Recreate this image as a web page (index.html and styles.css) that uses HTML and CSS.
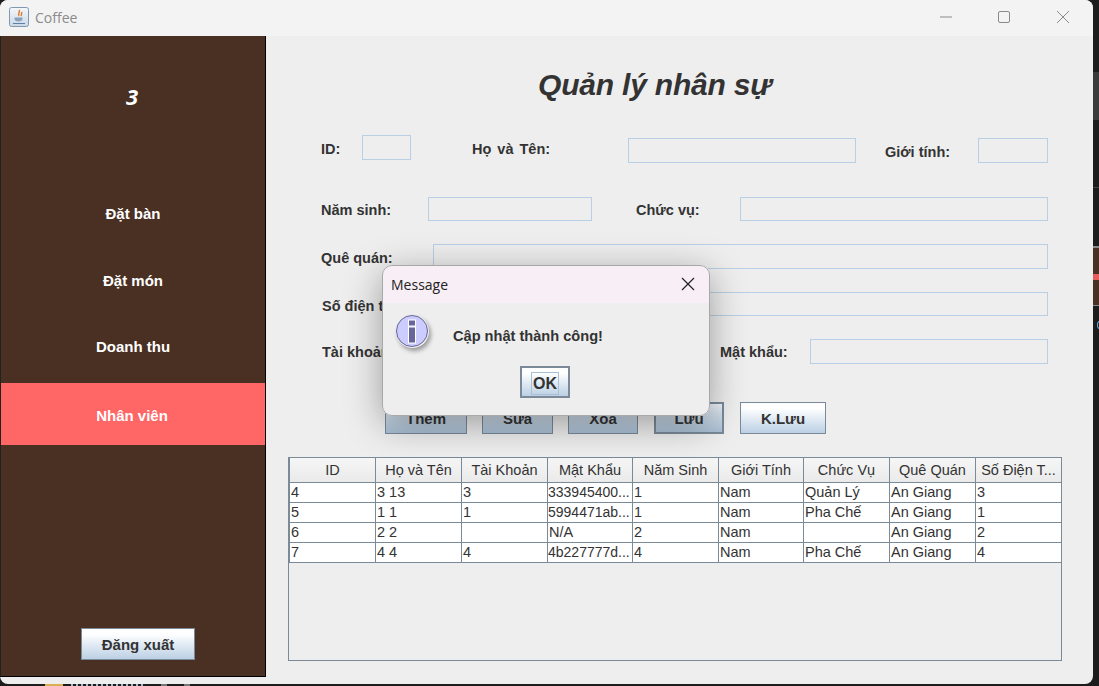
FILE: index.html
```html
<!DOCTYPE html>
<html lang="en">
<head>
  <meta charset="UTF-8">
  <title>Coffee</title>
  <link rel="stylesheet" href="styles.css">
</head>
<body>
<div class="desktop-right">
  <div class="desktop-panel"></div>
  <div class="desktop-line"></div>
  <div class="desktop-brown"><div class="desktop-red"></div></div>
  <div class="desktop-dot"></div>
</div>
<div class="desktop-bottom">
  <div class="taskbar-yellow"></div>
  <div class="taskbar-text"></div>
  <div class="taskbar-grey"></div>
  <div class="taskbar-grey"></div>
</div>

<div class="window">
  <div class="title-bar">
    <svg class="java-icon" width="20" height="20" viewBox="0 0 20 20">
      <defs>
        <linearGradient id="java-bg" x1="0" y1="0" x2="0" y2="1">
          <stop offset="0" stop-color="#f4f7fa"/>
          <stop offset="1" stop-color="#c9d8e6"/>
        </linearGradient>
      </defs>
      <rect x="0.5" y="0.5" width="19" height="19" rx="2" fill="url(#java-bg)" stroke="#8098b0"/>
      <path d="M10 3c2 2-2 3 0 6M12.500 5c1 1.500-1 2.500 0 4" stroke="#de7d32" stroke-width="1.500" fill="none"/>
      <path d="M5.500 10.500h8v1.500c0 1.500-1.800 2.500-4 2.500s-4-1-4-2.500z" fill="#8aa2ba"/>
      <path d="M4 16.500h12" stroke="#5b7fa6"/>
    </svg>
    <span class="title-text">Coffee</span>
    <div class="title-controls">
      <svg width="12" height="12" viewBox="0 0 12 12"><path d="M0 6h12" stroke="#8a8a8a"/></svg>
      <svg width="12" height="12" viewBox="0 0 12 12"><rect x="0.500" y="0.500" width="11" height="11" rx="1.500" fill="none" stroke="#8a8a8a"/></svg>
      <svg class="title-close" width="12" height="12" viewBox="0 0 12 12"><path d="M0 0l12 12M12 0L0 12" stroke="#8a8a8a"/></svg>
    </div>
  </div>

  <div class="main">
    <div class="side-menu">
      <div class="side-user">3</div>
      <div class="side-items">
        <div class="side-item">Đặt bàn</div>
        <div class="side-item">Đặt món</div>
        <div class="side-item side-item-up">Doanh thu</div>
        <div class="side-item side-item-active">Nhân viên</div>
      </div>
      <button class="java-btn logout-btn">Đăng xuất</button>
    </div>

    <div class="content">
      <h1 class="page-title">Quản lý nhân sự</h1>

      <div class="form-row row-1">
        <label class="lbl lbl-id">ID:</label>
        <div class="field field-id"></div>
        <label class="lbl lbl-name">Họ và Tên:</label>
        <div class="field field-name"></div>
        <label class="lbl lbl-gender">Giới tính:</label>
        <div class="field field-gender"></div>
      </div>
      <div class="form-row row-2">
        <label class="lbl lbl-year">Năm sinh:</label>
        <div class="field field-year"></div>
        <label class="lbl lbl-role">Chức vụ:</label>
        <div class="field field-grow"></div>
      </div>
      <div class="form-row row-3">
        <label class="lbl lbl-wide">Quê quán:</label>
        <div class="field field-grow"></div>
      </div>
      <div class="form-row row-4">
        <label class="lbl lbl-wide lbl-shift">Số điện thoại:</label>
        <div class="field field-grow"></div>
      </div>
      <div class="form-row row-5">
        <label class="lbl lbl-wide lbl-shift">Tài khoản:</label>
        <div class="field field-account"></div>
        <label class="lbl lbl-pass">Mật khẩu:</label>
        <div class="field field-grow"></div>
      </div>

      <div class="btn-row">
        <button class="java-btn btn-pressed btn-add">Thêm</button>
        <button class="java-btn btn-pressed btn-edit">Sửa</button>
        <button class="java-btn btn-pressed btn-del">Xóa</button>
        <button class="java-btn btn-pressed btn-focus btn-save">Lưu</button>
        <button class="java-btn btn-cancel">K.Lưu</button>
      </div>

      <div class="table-box">
        <table class="staff-table">
          <colgroup>
            <col class="col-wide"><col class="col-wide"><col class="col-wide"><col class="col-narrow"><col class="col-wide"><col class="col-narrow"><col class="col-wide"><col class="col-wide"><col class="col-wide">
          </colgroup>
          <thead>
            <tr><th>ID</th><th>Họ và Tên</th><th>Tài Khoản</th><th>Mật Khẩu</th><th>Năm Sinh</th><th>Giới Tính</th><th>Chức Vụ</th><th>Quê Quán</th><th>Số Điện T...</th></tr>
          </thead>
          <tbody>
            <tr><td>4</td><td>3 13</td><td>3</td><td class="cell-hash">333945400...</td><td>1</td><td>Nam</td><td>Quản Lý</td><td>An Giang</td><td>3</td></tr>
            <tr><td>5</td><td>1 1</td><td>1</td><td class="cell-hash">5994471ab...</td><td>1</td><td>Nam</td><td>Pha Chế</td><td>An Giang</td><td>1</td></tr>
            <tr><td>6</td><td>2 2</td><td></td><td>N/A</td><td>2</td><td>Nam</td><td></td><td>An Giang</td><td>2</td></tr>
            <tr><td>7</td><td>4 4</td><td>4</td><td class="cell-hash">4b227777d...</td><td>4</td><td>Nam</td><td>Pha Chế</td><td>An Giang</td><td>4</td></tr>
          </tbody>
        </table>
      </div>
    </div>
  </div>
</div>

<div class="dialog">
  <div class="dialog-title">
    <span>Message</span>
    <svg width="14" height="14" viewBox="0 0 14 14"><path d="M1 1l12 12M13 1L1 13" stroke="#222" stroke-width="1.200"/></svg>
  </div>
  <div class="dialog-body">
    <div class="info-icon">
      <svg width="33" height="33" viewBox="0 0 33 33">
        <circle cx="16" cy="16" r="15.500" fill="#ccccff" stroke="#666699"/>
        <rect x="12" y="4.500" width="8" height="7" fill="#fff"/>
        <rect x="12" y="11.500" width="8" height="17" fill="#fff"/>
        <rect x="13" y="5.500" width="6" height="5" fill="#666699"/>
        <rect x="13" y="12.500" width="6" height="15" fill="#666699"/>
      </svg>
    </div>
    <div class="dialog-msg">Cập nhật thành công!</div>
  </div>
  <div class="dialog-actions">
    <button class="java-btn ok-btn"><span class="ok-focus">OK</span></button>
  </div>
</div>
</body>
</html>
```

FILE: styles.css
```css
html, body {
  margin: 0;
  height: 686px;
  overflow: hidden;
  background: #1c1c1c;
  font-family: "Liberation Sans", Arial, sans-serif;
  color: #333;
}

/* what shows of the desktop behind the window */
.desktop-right {
  position: absolute;
  left: 1093px;
  top: 0;
  width: 6px;
  height: 686px;
}
.desktop-panel {
  margin-top: 72px;
  height: 48px;
  background: #3a3a3a;
}
.desktop-line {
  margin-top: 67px;
  height: 1px;
  background: #444;
}
.desktop-brown {
  position: relative;
  margin-top: 58px;
  height: 57px;
  background: #4a2f23;
  border-top: 2px solid #8a8a8a;
  border-bottom: 1px solid #8a8a8a;
}
.desktop-red {
  position: absolute;
  top: 26px;
  width: 100%;
  height: 6px;
  background: #e85c5c;
}
.desktop-dot {
  width: 5px;
  height: 8px;
  margin: 15px 0 0 4px;
  border: 1px solid #6ab0e8;
  border-radius: 50%;
  box-sizing: border-box;
}
.desktop-bottom {
  position: absolute;
  left: 45px;
  top: 684px;
  height: 2px;
  display: flex;
  gap: 17px;
}
.taskbar-yellow {
  width: 18px;
  background: #d9b04f;
}
.taskbar-text {
  width: 73px;
  margin-left: -9px;
  background: repeating-linear-gradient(90deg, #a9b9c9 0 2px, #1c1c1c 2px 5px);
}
.taskbar-grey {
  width: 6px;
  background: #777;
}

.window {
  position: absolute;
  left: 0;
  top: 0;
  width: 1093px;
  height: 684px;
  background: #eeeeee;
  border-radius: 8px;
  overflow: hidden;
}

.title-bar {
  box-sizing: border-box;
  height: 36px;
  padding: 0 0 2px 9px;
  background: #f3f3f3;
  display: flex;
  align-items: center;
}
.java-icon {
  margin-right: 6px;
}
.title-text {
  font-family: "Open Sans", sans-serif;
  font-size: 14px;
  color: #8b8b8b;
}
.title-controls {
  margin-left: auto;
  display: flex;
  gap: 46px;
  padding-right: 24px;
}
.title-close {
  margin-left: 1px;
}

.main {
  display: flex;
  align-items: flex-start;
}

.side-menu {
  box-sizing: border-box;
  width: 266px;
  height: 641px;
  background: #4a2f23;
  border-left: 1px solid #222;
  border-right: 1px solid #000;
  border-bottom: 1px solid #000;
  display: flex;
  flex-direction: column;
  color: #fff;
}
.side-user {
  margin-top: 46px;
  margin-bottom: 1px;
  padding-right: 2px;
  height: 28px;
  line-height: 28px;
  text-align: center;
  font-family: "Open Sans", sans-serif;
  font-weight: 700;
  font-style: italic;
  font-size: 22px;
  color: #fff;
}
.side-items {
  margin-top: 71px;
  display: flex;
  flex-direction: column;
  gap: 5px;
}
.side-item {
  box-sizing: border-box;
  height: 62px;
  padding-top: 1px;
  display: flex;
  align-items: center;
  justify-content: center;
  font-size: 15px;
  font-weight: 700;
}
.side-item-up {
  padding-top: 0;
  padding-bottom: 1px;
}
.side-item-active {
  background: #ff6666;
  padding-top: 3px;
  padding-right: 2px;
}

.java-btn {
  box-sizing: border-box;
  height: 32px;
  padding: 1px 0 0 0;
  border: 1px solid #7a8a99;
  background: linear-gradient(#fdfdfe 0%, #ffffff 18%, #dfe9f3 55%, #bcd0e4 100%);
  font-family: "Liberation Sans", Arial, sans-serif;
  font-size: 15px;
  font-weight: 700;
  color: #333;
}
.logout-btn {
  width: 114px;
  margin-top: 183px;
  margin-left: 80px;
}

.content {
  flex: 1;
  padding-left: 22px;
}
.page-title {
  margin: 30px 0 0 0;
  height: 40px;
  line-height: 38px;
  padding-left: 250px;
  font-size: 30px;
  font-weight: 700;
  font-style: italic;
  letter-spacing: -0.2px;
  color: #333;
}

.form-row {
  display: flex;
  align-items: flex-start;
  padding-left: 33px;
  width: 727px;
}
.row-1 { margin-top: 29px; height: 28px; }
.row-2 { margin-top: 34px; height: 24px; }
.row-3 { margin-top: 23px; height: 25px; }
.row-4 { margin-top: 23px; height: 24px; }
.row-5 { margin-top: 23px; height: 25px; }

.lbl {
  font-size: 14.500px;
  font-weight: 700;
  line-height: 24px;
  white-space: nowrap;
  color: #333;
}
.row-2 .lbl { margin-top: 1px; }
.row-3 .lbl, .row-4 .lbl { margin-top: 2px; }
.row-5 .lbl { margin-top: 1px; }

.field {
  box-sizing: border-box;
  height: 25px;
  border: 1px solid #b8cfe5;
}
.row-2 .field, .row-4 .field { height: 24px; }
.field-grow { flex: 1; }

.lbl-id { width: 41px; margin-top: 2px; }
.field-id { width: 49px; }
.lbl-name { width: 156px; margin-left: 61px; margin-top: 2px; word-spacing: 2px; }
.field-name { width: 228px; margin-top: 3px; }
.lbl-gender { width: 93px; margin-left: 29px; margin-top: 5px; }
.field-gender { width: 70px; margin-top: 3px; }

.lbl-year { width: 107px; }
.field-year { width: 164px; }
.lbl-role { width: 104px; margin-left: 44px; }

.lbl-wide { width: 112px; }
.lbl-shift { width: 111px; margin-left: 1px; overflow: hidden; }
.field-account { width: 257px; }
.lbl-pass { width: 90px; margin-left: 30px; }

.btn-row {
  display: flex;
  gap: 15px;
  margin-top: 38px;
  margin-left: 97px;
}
.btn-pressed { background: linear-gradient(#eef3f8, #d5e1ec 30%, #a9bfd4); }
.btn-add { width: 82px; }
.btn-edit { width: 71px; }
.btn-del { width: 70px; }
.btn-save { width: 70px; margin-left: 1px; }
.btn-focus { border-width: 2px; }
.btn-cancel { width: 86px; margin-left: 1px; }

.table-box {
  box-sizing: border-box;
  width: 774px;
  height: 204px;
  margin-top: 23px;
  border: 1px solid #7a8a99;
}
.staff-table {
  border-collapse: collapse;
  table-layout: fixed;
  width: 772px;
  font-size: 14.500px;
  color: #333;
}
.col-wide { width: 86px; }
.col-narrow { width: 85px; }
.staff-table th {
  height: 24px;
  padding: 0;
  font-weight: 400;
  background: linear-gradient(#f6f6f6, #eaeaea);
  border: 1px solid #7a8a99;
  border-top: 0;
}
.staff-table td {
  height: 19px;
  padding: 0 0 0 1px;
  background: #fff;
  border: 1px solid #7a8a99;
  white-space: nowrap;
  overflow: hidden;
  line-height: 19px;
}
.staff-table td.cell-hash {
  padding-left: 0;
  font-size: 14px;
}

.dialog {
  position: absolute;
  left: 382px;
  top: 265px;
  width: 328px;
  height: 151px;
  background: #eeeeee;
  border-radius: 10px;
  outline: 1px solid #a8a8a8;
  outline-offset: -1px;
  box-shadow: 0 8px 36px rgba(0, 0, 0, .35);
  overflow: hidden;
}
.dialog-title {
  height: 38px;
  background: #f8eff6;
  display: flex;
  align-items: center;
  justify-content: space-between;
  padding: 0 15px 0 9px;
  font-family: "Open Sans", sans-serif;
  font-size: 14px;
  color: #222;
}
.dialog-body {
  display: flex;
  padding-left: 14px;
}
.info-icon {
  width: 33px;
  height: 33px;
  margin-top: 12px;
  border-radius: 50%;
  box-shadow: 2px 3px 4px rgba(0, 0, 0, .35);
}
.dialog-msg {
  margin-left: 24px;
  margin-top: 24px;
  font-size: 14.600px;
  font-weight: 700;
  line-height: 18px;
}
.dialog-actions {
  display: flex;
  justify-content: center;
  margin-top: 18px;
  padding-right: 2px;
}
.ok-btn {
  width: 50px;
  height: 32px;
  padding-top: 2px;
  border: 2px solid #7a8a99;
  font-size: 16px;
  display: flex;
  align-items: center;
  justify-content: center;
}
.ok-focus {
  border: 1px solid #a8bfd4;
  padding: 1px;
  line-height: 19px;
}
```
